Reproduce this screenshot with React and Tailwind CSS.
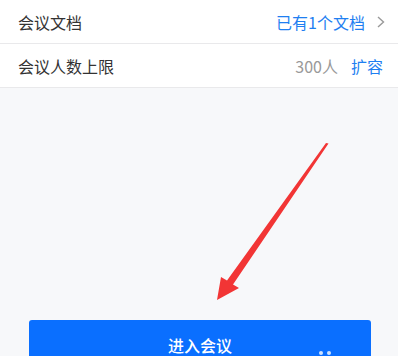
import React from "react";

const font = { fontFamily: '"Noto Sans CJK SC", "Noto Sans", sans-serif' };

const Row = ({ label, children }) => (
  <div className="flex h-[44px] items-center justify-between border-b border-[#e9e9eb] bg-white pl-[18px] pr-[15px]">
    <span className="text-[16px] text-[#333]">{label}</span>
    <div className="flex items-center">{children}</div>
  </div>
);

const App = () => {
  return (
    <div className="relative h-[356px] w-[398px] overflow-hidden bg-[#f7f8fa]" style={font}>
      <Row label="会议文档">
        <span className="text-[16px] text-[#1f7ff1]">已有1个文档</span>
        <svg width="10" height="14" viewBox="0 0 10 14" className="ml-[11px] mr-[-3px]">
          <path d="M2 2 L7.5 7 L2 12" fill="none" stroke="#999" strokeWidth="1.4" />
        </svg>
      </Row>
      <Row label="会议人数上限">
        <span className="text-[16px] text-[#999]">300人</span>
        <span className="ml-[13px] text-[16px] text-[#1f7ff1]">扩容</span>
      </Row>

      <div className="mt-[232px] pl-[29px] pr-[27px]">
        <button className="relative flex h-[48px] w-full justify-center rounded-[3px] bg-[#0a6fff] pt-[13px] text-[16px] font-medium text-white">
          进入会议
          <span className="absolute left-[290px] top-[31px] h-[4px] w-[4px] rounded-full bg-white/80" />
          <span className="absolute left-[298px] top-[31px] h-[4px] w-[4px] rounded-full bg-white/80" />
        </button>
      </div>

      <svg className="absolute left-0 top-0" width="398" height="356" viewBox="0 0 398 356">
        <polygon
          points="326,143 328.5,143.5 233,284.5 239,288 217,300 221,277 227,280.5"
          fill="#f23535"
        />
      </svg>
    </div>
  );
};

export default App;
